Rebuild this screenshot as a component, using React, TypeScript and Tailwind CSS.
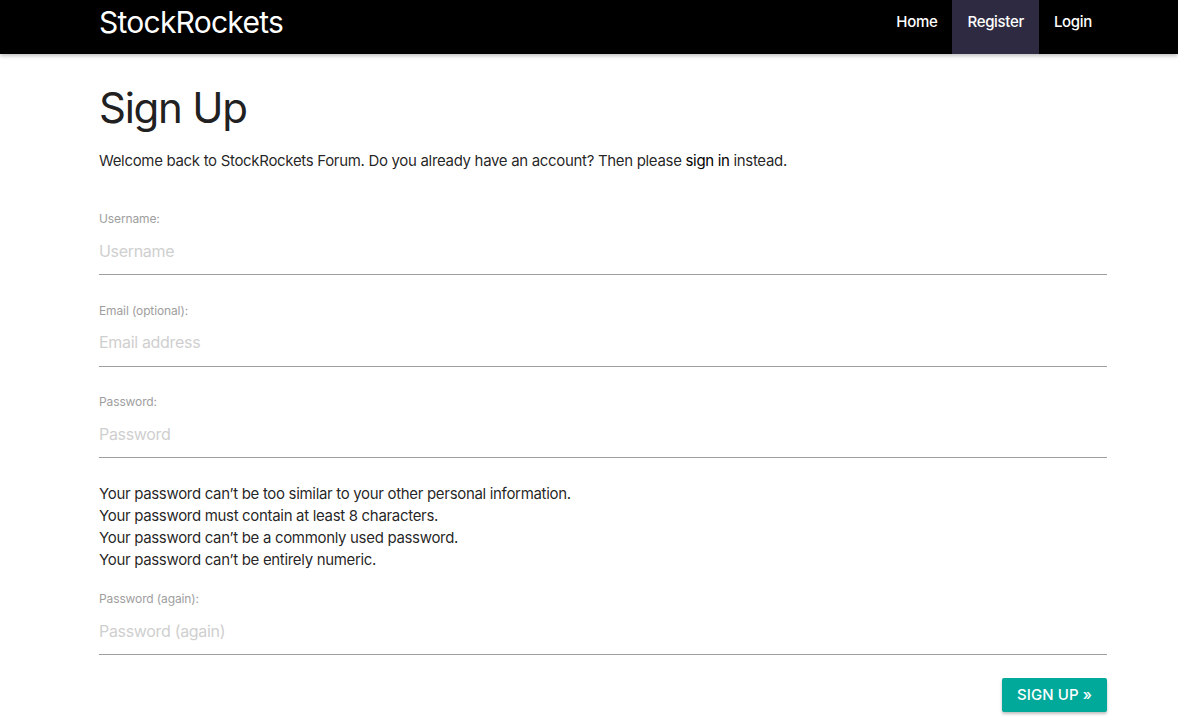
import React from 'react'

const font = { fontFamily: 'Inter, "Helvetica Neue", Arial, sans-serif' }

function Field({ label, placeholder, type = 'text' }: { label: string; placeholder: string; type?: string }) {
  return (
    <div className="flex flex-col">
      <label className="text-[12px] leading-[16px] tracking-[-0.01em] text-[#9e9e9e]">{label}</label>
      <input
        type={type}
        placeholder={placeholder}
        className="h-[48px] w-full border-b border-[#9e9e9e] bg-transparent text-[16px] tracking-[-0.02em] text-[#212121] outline-none placeholder:text-[#cfcfcf]"
      />
    </div>
  )
}

export default function App() {
  return (
    <div className="min-h-screen bg-white text-[rgba(0,0,0,0.87)] tracking-[-0.02em]" style={font}>
      {/* 顶部导航 */}
      <nav className="h-[54px] bg-black shadow-[0_2px_4px_rgba(0,0,0,0.25)]">
        <div className="ml-[99px] flex h-full w-[1008px] items-center justify-between">
          <a href="#" className="-mt-[11px] text-[30px] leading-none tracking-[-0.025em] text-white">
            StockRockets
          </a>
          <ul className="flex h-full items-stretch text-[15px] font-medium text-white">
            <li className="flex items-center px-[15px] pb-[10px]">Home</li>
            <li className="flex items-center bg-[#2d2a41] px-[15px] pb-[10px]">Register</li>
            <li className="flex items-center px-[15px] pb-[10px]">Login</li>
          </ul>
        </div>
      </nav>

      {/* 注册表单 */}
      <main className="ml-[99px] w-[1008px] pt-[26px]">
        <h1 className="text-[42px] leading-[56px] tracking-[-0.03em] text-[#212121]">Sign Up</h1>
        <p className="mt-[14px] text-[15px] leading-[22px]">
          Welcome back to StockRockets Forum. Do you already have an account? Then please{' '}
          <a href="#" className="text-black">sign in</a> instead.
        </p>

        <form className="mt-[39px] flex flex-col">
          <div className="flex flex-col gap-[27.5px]">
            <Field label="Username:" placeholder="Username" />
            <Field label="Email (optional):" placeholder="Email address" type="email" />
            <Field label="Password:" placeholder="Password" type="password" />
          </div>

          <ul className="mt-[25px] text-[15px] leading-[22px]">
            <li>Your password can’t be too similar to your other personal information.</li>
            <li>Your password must contain at least 8 characters.</li>
            <li>Your password can’t be a commonly used password.</li>
            <li>Your password can’t be entirely numeric.</li>
          </ul>

          <div className="mt-[20px]">
            <Field label="Password (again):" placeholder="Password (again)" type="password" />
          </div>

          <div className="mt-[23px] flex justify-end">
            <button
              type="button"
              className="h-[34px] rounded-[2px] bg-[#00a99a] px-[15px] text-[15px] font-medium uppercase tracking-[0.1px] text-white shadow-[0_2px_3px_rgba(0,0,0,0.25)]"
            >
              Sign Up »
            </button>
          </div>
        </form>
      </main>
    </div>
  )
}
